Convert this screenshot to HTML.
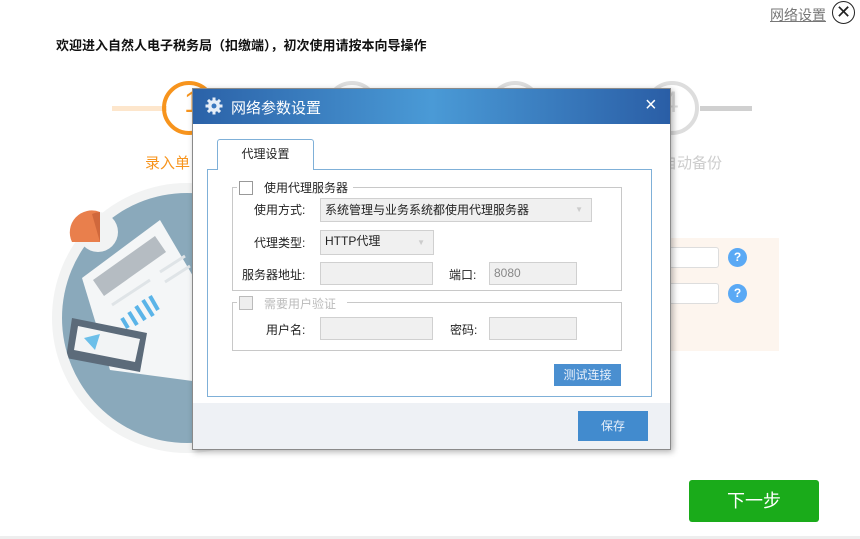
<!DOCTYPE html>
<html><head><meta charset="utf-8"><style>
*{margin:0;padding:0;box-sizing:border-box}
body{width:860px;height:539px;background:#fff;position:relative;overflow:hidden;font-family:"Liberation Sans","Noto Sans CJK SC",sans-serif;font-size:12px;color:#222}
.a{position:absolute}
.in{position:absolute;background:#f0f0f0;border:1px solid #d0d0d0;color:#555;font-size:12px;padding-left:4px;line-height:20px}
.lbl{position:absolute;font-size:12px;color:#222;line-height:14px}
.circ{position:absolute;width:54px;height:54px;border-radius:50%;border:4px solid #ddd}
</style></head><body>
<div class="a" style="left:770px;top:5px;font-size:14px;color:#777;text-decoration:underline">网络设置</div>
<div class="a" style="left:832px;top:1px;width:23px;height:23px;border:1.5px solid #222;border-radius:50%;text-align:center;line-height:20px;font-size:18px">✕</div>
<div class="a" style="left:56px;top:35px;font-size:13px;font-weight:bold;color:#111">欢迎进入自然人电子税务局（扣缴端），初次使用请按本向导操作</div>
<div class="a" style="left:112px;top:106px;width:55px;height:5px;background:#fde6cc"></div>
<div class="a" style="left:700px;top:106px;width:52px;height:5px;background:#d0d0d0"></div>
<div class="circ" style="left:162px;top:81px;border-color:#f7941d"></div>
<div class="a" style="left:184px;top:86px;font-size:30px;color:#f7941d">1</div>
<div class="circ" style="left:645px;top:81px"></div>
<div class="a" style="left:662px;top:86px;font-size:30px;color:#ddd">4</div>
<div class="circ" style="left:325px;top:81px"></div><div class="circ" style="left:488px;top:81px"></div>
<div class="a" style="left:145px;top:152px;font-size:15px;color:#f7941d">录入单</div>
<div class="a" style="left:662px;top:152px;font-size:15px;color:#ccc">自动备份</div>
<svg class="a" style="left:0;top:0" width="330" height="460" viewBox="0 0 330 460">
 <defs><clipPath id="c"><circle cx="187" cy="318" r="125"/></clipPath></defs>
 <circle cx="187" cy="318" r="135" fill="#f2f3f3"/>
 <circle cx="187" cy="318" r="125" fill="#8aa9bb"/>
 <g clip-path="url(#c)">
  <polygon points="82,278 160,220 260,390 110,370" fill="#f4f6f7"/>
  <polygon points="93,280 155,236 166,252 104,296" fill="#b5bcc2"/>
  <g stroke="#dfe4e7" stroke-width="3"><line x1="112" y1="305" x2="150" y2="280"/><line x1="160" y1="272" x2="185" y2="256"/><line x1="165" y1="282" x2="190" y2="266"/></g>
  <g stroke="#5ab4e8" stroke-width="4"><line x1="122" y1="318" x2="128" y2="328"/><line x1="129" y1="312" x2="137" y2="325"/><line x1="136" y1="306" x2="145" y2="320"/><line x1="143" y1="300" x2="153" y2="316"/><line x1="150" y1="296" x2="158" y2="310"/></g>
  <polygon points="72,318 147,333 140,372 66,358" fill="#5c6b7a"/>
  <polygon points="78,326 140,339 135,362 74,350" fill="#f2f4f5"/>
  <polygon points="84,338 100,334 95,350" fill="#6cbfe9"/>
 </g>
 <circle cx="98" cy="232" r="20" fill="#f2f3f3"/>
 <path d="M72,242 A22,22 0 0 1 100,212 L100,242 Z" fill="#e97f4c"/>
 <path d="M92,214 A22,22 0 0 1 100,212 L100,242 Z" fill="#d0683c"/>
</svg>
<div class="a" style="left:645px;top:238px;width:134px;height:113px;background:#fdf5ee"></div>
<div class="a" style="left:640px;top:247px;width:79px;height:21px;background:#fff;border:1px solid #ddd;border-radius:3px"></div>
<div class="a" style="left:640px;top:283px;width:79px;height:21px;background:#fff;border:1px solid #ddd;border-radius:3px"></div>
<div class="a" style="left:728px;top:248px;width:19px;height:19px;border-radius:50%;background:#5aa9f5;color:#fff;font-weight:bold;text-align:center;line-height:19px">?</div>
<div class="a" style="left:728px;top:284px;width:19px;height:19px;border-radius:50%;background:#5aa9f5;color:#fff;font-weight:bold;text-align:center;line-height:19px">?</div>
<div class="a" style="left:689px;top:480px;width:130px;height:42px;background:#1aab1a;border-radius:3px;color:#fff;font-size:18px;text-align:center;line-height:42px">下一步</div>
<div class="a" style="left:0;top:536px;width:860px;height:3px;background:#eee"></div>
<!-- dialog -->
<div class="a" style="left:192px;top:88px;width:479px;height:362px;background:#fff;border:1px solid #8a8a8a;box-shadow:2px 2px 6px rgba(0,0,0,.3)"></div>
<div class="a" style="left:193px;top:89px;width:477px;height:35px;background:linear-gradient(90deg,#2b62a8,#4a9ad6 50%,#2a5ea6)"></div>
<svg class="a" style="left:205px;top:97px" width="18" height="18" viewBox="0 0 18 18"><g fill="#e6eef8"><circle cx="9" cy="9" r="6"/><g id="t"><rect x="7.5" y="0.5" width="3" height="4"/><rect x="7.5" y="13.5" width="3" height="4"/></g><use href="#t" transform="rotate(45 9 9)"/><use href="#t" transform="rotate(90 9 9)"/><use href="#t" transform="rotate(135 9 9)"/></g><circle cx="9" cy="9" r="2.5" fill="#3a78bf"/></svg>
<div class="a" style="left:231px;top:97px;color:#fff;font-size:15px">网络参数设置</div>
<div class="a" style="left:645px;top:94px;color:#fff;font-size:20px;font-weight:300">×</div>
<div class="a" style="left:207px;top:169px;width:445px;height:228px;border:1px solid #7fb0d8"></div>
<div class="a" style="left:217px;top:139px;width:97px;height:31px;border:1px solid #7fb0d8;border-bottom:none;background:#fff;border-radius:3px 3px 0 0;text-align:center;line-height:29px;font-size:12px">代理设置</div>
<div class="a" style="left:232px;top:187px;width:390px;height:104px;border:1px solid #c8c8c8"></div>
<div class="a" style="left:237px;top:180px;width:116px;height:16px;background:#fff"></div>
<div class="a" style="left:239px;top:181px;width:14px;height:14px;border:1px solid #999;background:#fff"></div>
<div class="lbl" style="left:264px;top:181px">使用代理服务器</div>
<div class="lbl" style="left:254px;top:203px">使用方式:</div>
<div class="in" style="left:320px;top:198px;width:272px;height:24px;line-height:22px;color:#222">系统管理与业务系统都使用代理服务器<span style="position:absolute;right:8px;color:#ccc;font-size:8px">▼</span></div>
<div class="lbl" style="left:254px;top:236px">代理类型:</div>
<div class="in" style="left:320px;top:230px;width:114px;height:25px;line-height:20px;color:#222">HTTP代理<span style="position:absolute;right:8px;top:2px;color:#ccc;font-size:8px">▼</span></div>
<div class="lbl" style="left:242px;top:268px">服务器地址:</div>
<div class="in" style="left:320px;top:262px;width:113px;height:23px"></div>
<div class="lbl" style="left:449px;top:268px">端口:</div>
<div class="in" style="left:489px;top:262px;width:88px;height:23px;color:#888">8080</div>
<div class="a" style="left:232px;top:302px;width:390px;height:49px;border:1px solid #c8c8c8"></div>
<div class="a" style="left:237px;top:295px;width:110px;height:16px;background:#fff"></div>
<div class="a" style="left:239px;top:296px;width:14px;height:14px;border:1px solid #bbb;background:#eee"></div>
<div class="lbl" style="left:264px;top:297px;color:#bbb">需要用户验证</div>
<div class="lbl" style="left:266px;top:323px">用户名:</div>
<div class="in" style="left:320px;top:317px;width:113px;height:23px"></div>
<div class="lbl" style="left:450px;top:323px">密码:</div>
<div class="in" style="left:489px;top:317px;width:88px;height:23px"></div>
<div class="a" style="left:554px;top:364px;width:67px;height:22px;background:#4a8fd0;color:#e8f0fa;text-align:center;line-height:22px">测试连接</div>
<div class="a" style="left:193px;top:403px;width:477px;height:46px;background:#eef1f5"></div>
<div class="a" style="left:578px;top:411px;width:70px;height:30px;background:#428bce;color:#e8f0fa;text-align:center;line-height:30px">保存</div>
</body></html>
